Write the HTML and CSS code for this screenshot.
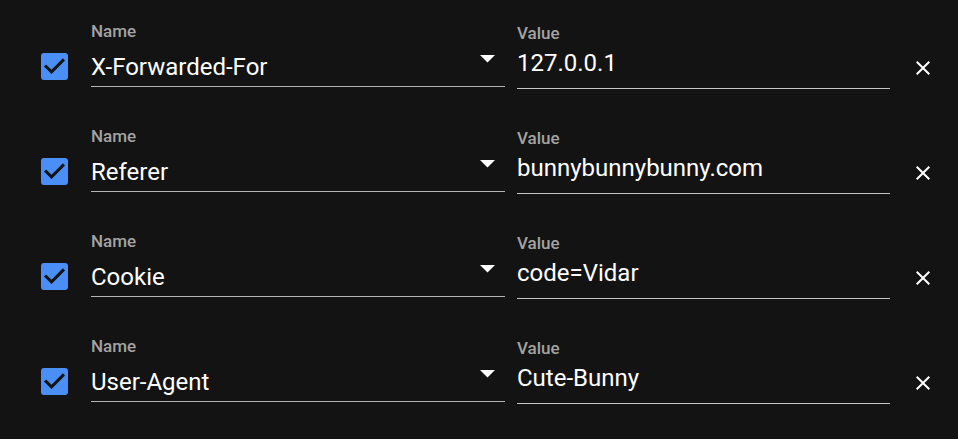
FILE: index.html
```html
<!DOCTYPE html>
<html>
<head>
<meta charset="utf-8">
<link rel="stylesheet" href="styles.css">
</head>
<body>
<div class="list">
  <div class="row">
    <svg class="check" viewBox="3 3 18 18"><rect x="3" y="3" width="18" height="18" rx="2" fill="#4a8ff5"/><path d="M10 17l-5-5 1.41-1.41L10 14.170l7.59-7.59L19 8l-9 9z" fill="#131313"/></svg>
    <div class="field name">
      <div class="label">Name</div>
      <div class="input"><span class="text">X-Forwarded-For</span><svg class="arrow" viewBox="7 10 10 5"><path d="M7 10l5 5 5-5z" fill="#fff"/></svg></div>
    </div>
    <div class="field value">
      <div class="label">Value</div>
      <div class="input"><span class="text">127.0.0.1</span></div>
    </div>
    <svg class="close" viewBox="0 0 24 24"><path d="M19 6.41L17.59 5 12 10.59 6.41 5 5 6.41 10.59 12 5 17.59 6.41 19 12 13.41 17.59 19 19 17.59 13.41 12z" fill="#fff"/></svg>
  </div>
  <div class="row">
    <svg class="check" viewBox="3 3 18 18"><rect x="3" y="3" width="18" height="18" rx="2" fill="#4a8ff5"/><path d="M10 17l-5-5 1.41-1.41L10 14.17l7.59-7.59L19 8l-9 9z" fill="#131313"/></svg>
    <div class="field name">
      <div class="label">Name</div>
      <div class="input"><span class="text">Referer</span><svg class="arrow" viewBox="7 10 10 5"><path d="M7 10l5 5 5-5z" fill="#fff"/></svg></div>
    </div>
    <div class="field value">
      <div class="label">Value</div>
      <div class="input"><span class="text">bunnybunnybunny.com</span></div>
    </div>
    <svg class="close" viewBox="0 0 24 24"><path d="M19 6.41L17.59 5 12 10.59 6.41 5 5 6.41 10.59 12 5 17.59 6.41 19 12 13.41 17.59 19 19 17.59 13.41 12z" fill="#fff"/></svg>
  </div>
  <div class="row">
    <svg class="check" viewBox="3 3 18 18"><rect x="3" y="3" width="18" height="18" rx="2" fill="#4a8ff5"/><path d="M10 17l-5-5 1.41-1.41L10 14.17l7.59-7.59L19 8l-9 9z" fill="#131313"/></svg>
    <div class="field name">
      <div class="label">Name</div>
      <div class="input"><span class="text">Cookie</span><svg class="arrow" viewBox="7 10 10 5"><path d="M7 10l5 5 5-5z" fill="#fff"/></svg></div>
    </div>
    <div class="field value">
      <div class="label">Value</div>
      <div class="input"><span class="text">code=Vidar</span></div>
    </div>
    <svg class="close" viewBox="0 0 24 24"><path d="M19 6.41L17.59 5 12 10.59 6.41 5 5 6.41 10.59 12 5 17.59 6.41 19 12 13.41 17.59 19 19 17.59 13.41 12z" fill="#fff"/></svg>
  </div>
  <div class="row">
    <svg class="check" viewBox="3 3 18 18"><rect x="3" y="3" width="18" height="18" rx="2" fill="#4a8ff5"/><path d="M10 17l-5-5 1.41-1.41L10 14.17l7.59-7.59L19 8l-9 9z" fill="#131313"/></svg>
    <div class="field name">
      <div class="label">Name</div>
      <div class="input"><span class="text">User-Agent</span><svg class="arrow" viewBox="7 10 10 5"><path d="M7 10l5 5 5-5z" fill="#fff"/></svg></div>
    </div>
    <div class="field value">
      <div class="label">Value</div>
      <div class="input"><span class="text">Cute-Bunny</span></div>
    </div>
    <svg class="close" viewBox="0 0 24 24"><path d="M19 6.41L17.59 5 12 10.59 6.41 5 5 6.41 10.59 12 5 17.59 6.41 19 12 13.41 17.59 19 19 17.59 13.41 12z" fill="#fff"/></svg>
  </div>
</div>
</body>
</html>
```
FILE: styles.css
```css
html, body {
  margin: 0;
  padding: 0;
  background: #131313;
  height: 100%;
  overflow: hidden;
}
body {
  font-family: Roboto, "Liberation Sans", sans-serif;
  color: #fff;
}
.row {
  display: flex;
  align-items: flex-start;
  height: 105px;
  padding-left: 41px;
}
.check {
  width: 27px;
  height: 27px;
  margin-top: 53px;
  margin-right: 23px;
  flex: none;
}
.field {
  box-sizing: border-box;
  flex: none;
}
.label {
  font-size: 17px;
  font-weight: 500;
  line-height: 20px;
  height: 20px;
  color: #a3a3a3;
}
.input {
  display: flex;
  align-items: flex-start;
  height: 28px;
  font-size: 24px;
  line-height: 28px;
}
.text {
  flex: 1;
  white-space: nowrap;
}
.name {
  width: 414px;
  padding-top: 21px;
  padding-bottom: 5px;
  border-bottom: 1px solid #b4b4b4;
}
.name .input {
  margin-top: 12px;
}
.arrow {
  width: 15px;
  height: 7.5px;
  margin-top: 2px;
  margin-right: 10px;
}
.value {
  width: 373px;
  margin-left: 12px;
  padding-top: 22.5px;
  padding-bottom: 11px;
  border-bottom: 1px solid #c4c4c4;
}
.value .input {
  margin-top: 6.5px;
}
.close {
  width: 24px;
  height: 24px;
  margin-left: 21px;
  margin-top: 55.5px;
  flex: none;
}
```
